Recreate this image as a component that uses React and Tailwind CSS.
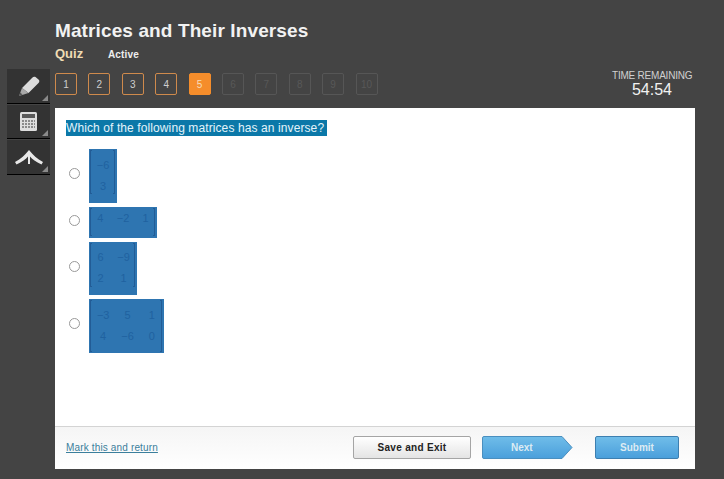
import { Fragment } from 'react';

const pages = [1, 2, 3, 4, 5, 6, 7, 8, 9, 10];

const matrices = [
    { rows: [['−6'], ['3']], box: 'w-[28px] h-[54px] pt-[6px]', grid: 'grid-cols-1', bracket: 'top-[1px] bottom-[9px]', mt: 'mt-[6px]' },
    { rows: [['4', '−2', '1']], box: 'w-[68px] h-[31px] pt-[1px]', grid: 'grid-cols-3', bracket: 'top-[1px] bottom-[2px]', mt: 'mt-[4px]' },
    { rows: [['6', '−9'], ['2', '1']], box: 'w-[48px] h-[53px] pt-[5px] pr-[2px]', grid: 'grid-cols-2', bracket: 'top-[1px] bottom-[8px]', mt: 'mt-[4px]' },
    { rows: [['−3', '5', '1'], ['4', '−6', '0']], box: 'w-[75px] h-[54px] pt-[6px] pl-[2px]', grid: 'grid-cols-3', bracket: 'top-[1px] bottom-[1px]', mt: 'mt-[4px]' },
];

function Corner() {
    return <span className="absolute right-[2px] bottom-[2px] w-0 h-0 border-l-[6px] border-l-transparent border-b-[6px] border-b-[#8a8a8a]" />;
}

function Matrix({ m }) {
    return (
        <div className={`relative ${m.box} bg-[#2e75b1] text-[#2062a0] text-[11px]`}>
            <span className={`absolute left-[1px] w-[2px] border-l border-y border-[#225c96] ${m.bracket}`} />
            <span className={`absolute right-[2px] w-[2px] border-r border-y border-[#225c96] ${m.bracket}`} />
            <div className={`grid ${m.grid} auto-rows-[21px] leading-[21px] justify-items-center`}>
                {m.rows.map((row, i) => (
                    <Fragment key={i}>
                        {row.map((v, j) => <span key={j}>{v}</span>)}
                    </Fragment>
                ))}
            </div>
        </div>
    );
}

export default function App() {
    return (
        <div className="w-[724px] h-[479px] bg-[#444444] flex overflow-hidden font-['Liberation_Sans',sans-serif]">
            {/* Tools */}
            <div className="w-[55px] pl-[7px] pt-[69px] shrink-0">
                <div className="w-[43px] flex flex-col gap-[1px]">
                    <div className="relative h-[35px] bg-[#333333] border-b border-black flex items-center justify-center">
                        <svg width="22" height="20" viewBox="0 0 22 20">
                            <path d="M4 12L14 2c1-1 2-1.500 3.500-1l3 2.500c1.200 1 1 2.500 0 3.500L10.500 17z" fill="#dcdcdc" />
                            <path d="M4 12l6.500 5L1 20z" fill="#a8a8a8" />
                            <path d="M1 20l1.200-3.500 2.300 2z" fill="#555555" />
                        </svg>
                        <Corner />
                    </div>
                    <div className="relative h-[34px] bg-[#333333] border-b border-black flex items-center justify-center">
                        <svg width="17" height="19" viewBox="0 0 17 19">
                            <rect width="17" height="19" rx="1.500" fill="#dedede" />
                            <rect x="2" y="2" width="13" height="4" fill="#5a5a5a" />
                            <path d="M2 9h13M2 12h13M2 15h13" stroke="#8a8a8a" strokeWidth="2" strokeDasharray="2 1" />
                        </svg>
                        <Corner />
                    </div>
                    <div className="relative h-[35px] bg-[#333333] border-b border-black flex items-center justify-center">
                        <svg width="28" height="16" viewBox="0 0 28 16">
                            <path d="M0 13C6 10 10 6 14 1c4 5 8 9 14 12l-1.500 2.500C21 13 17 10 15 7.500V15h-2V7.500C11 10 7 13 1.500 15.500z" fill="#e8e8e8" />
                        </svg>
                        <Corner />
                    </div>
                </div>
            </div>

            <div className="w-[640px] shrink-0">
                {/* Header */}
                <div className="h-[73px] pt-[20px]">
                    <h1 className="text-[19px] leading-[22px] font-bold tracking-[0.115px] text-[#f2f2f2]">Matrices and Their Inverses</h1>
                    <div className="flex items-baseline mt-[1px]">
                        <span className="w-[53px] text-[13px] leading-[22px] font-bold text-[#f0dcb4]">Quiz</span>
                        <span className="text-[10px] font-bold tracking-[0.15px] text-[#eeeeee]">Active</span>
                    </div>
                </div>

                {/* Pager */}
                <div className="h-[35px] flex justify-between">
                    <div className="flex gap-[11.4px] h-[22px]">
                        {pages.map(p => (
                            <div
                                key={p}
                                className={`w-[22px] h-[22px] rounded-[2px] border flex items-center justify-center text-[10px] ${
                                    p === 5 ? 'bg-[#f58d2b] border-[#f58d2b] text-[#f6dcbc]'
                                    : p < 5 ? 'border-[#cf8a4c] text-[#cfcfcf]'
                                    : 'border-[#565656] text-[#585858]'
                                }`}
                            >
                                {p}
                            </div>
                        ))}
                    </div>
                    <div className="w-[80px] mr-[3px] -mt-[3px] text-center">
                        <div className="text-[10px] leading-[11px] tracking-[-0.22px] whitespace-nowrap text-[#d0d0d0]">TIME REMAINING</div>
                        <div className="text-[16px] leading-[17px] text-[#f2f2f2]">54:54</div>
                    </div>
                </div>

                {/* Question panel */}
                <div className="h-[361px] bg-white flex flex-col">
                    <div className="flex-1 pl-[11px] pt-[12px]">
                        <div className="w-fit h-[16px] bg-[#0b78a8] text-[12px] leading-[16px] tracking-[0.1px] pr-[3px] text-[#e3f4fb]">Which of the following matrices has an inverse?</div>
                        <div className="mt-[13px]">
                            {matrices.map((m, i) => (
                                <div key={i} className={`flex items-center gap-[9px] ${m.mt}`}>
                                    <span className="w-[11px] h-[11px] ml-[3px] mb-[5px] rounded-full border border-[#999999] bg-white" />
                                    <Matrix m={m} />
                                </div>
                            ))}
                        </div>
                    </div>

                    {/* Footer */}
                    <div className="h-[43px] border-t border-[#d4d4d4] bg-gradient-to-b from-[#f5f5f5] to-white flex items-center pl-[11px] pr-[16px] pb-[1px]">
                        <a className="text-[10px] tracking-[0.15px] underline text-[#3b7f9c]">Mark this and return</a>
                        <button className="ml-auto w-[118px] h-[23px] rounded-[2px] border border-[#a5a5a5] bg-gradient-to-b from-white to-[#e4e4e4] text-[10px] font-bold tracking-[0.3px] text-[#222222]">Save and Exit</button>
                        <div className="relative ml-[11px] w-[91px] h-[23px]">
                            <svg className="absolute inset-0" width="91" height="23" viewBox="0 0 91 23">
                                <defs>
                                    <linearGradient id="nextFill" x1="0" y1="0" x2="0" y2="1">
                                        <stop offset="0" stopColor="#70bde9" />
                                        <stop offset="1" stopColor="#4a9fdb" />
                                    </linearGradient>
                                </defs>
                                <path d="M2 .5h78l10 11-10 11H2a1.500 1.500 0 0 1-1.500-1.500V2A1.500 1.500 0 0 1 2 .5z" fill="url(#nextFill)" stroke="#4a8fbf" />
                            </svg>
                            <span className="absolute left-[29px] top-[5px] text-[10px] leading-[14px] font-bold text-[#dcebf3]">Next</span>
                        </div>
                        <button className="ml-[22px] w-[84px] h-[23px] rounded-[2px] border border-[#3d7fb0] bg-gradient-to-b from-[#70bde9] to-[#4a9fdb] text-[10px] font-bold text-[#dcebf3]">Submit</button>
                    </div>
                </div>
            </div>
        </div>
    );
}
